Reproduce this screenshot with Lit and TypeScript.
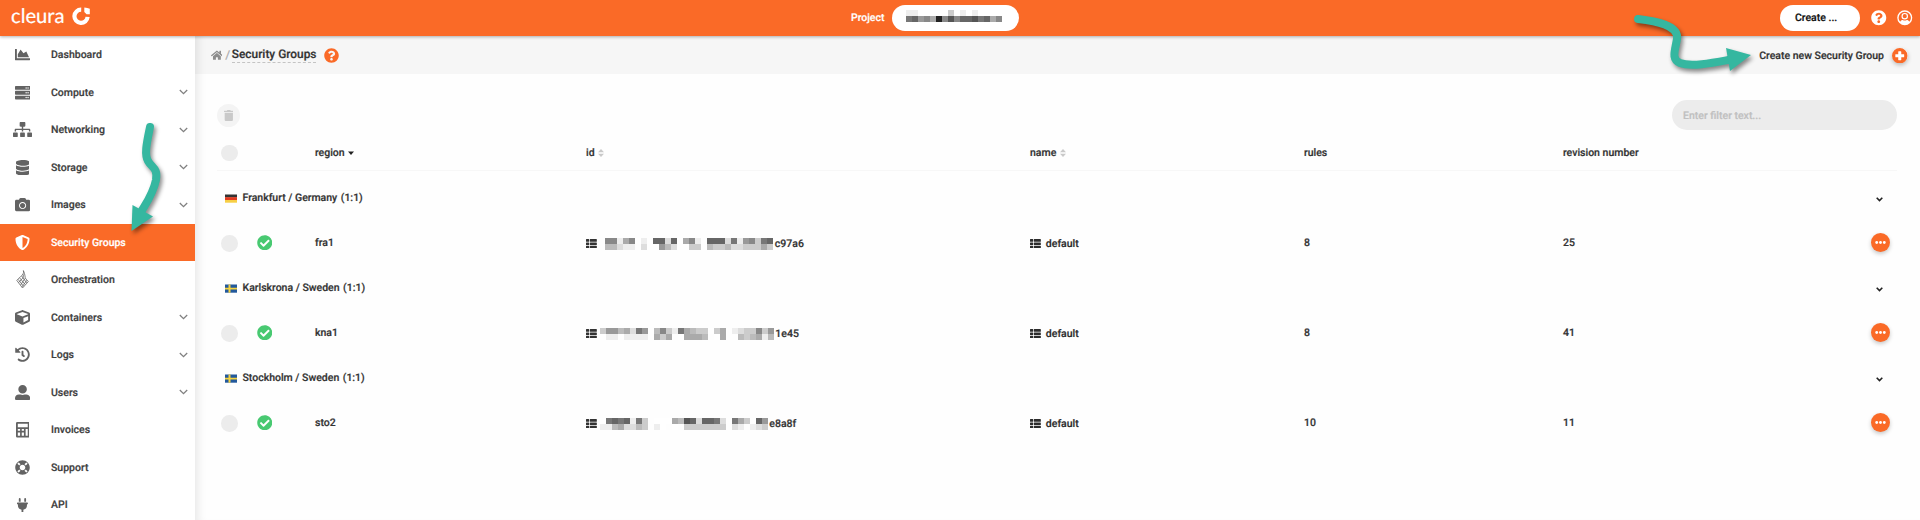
import { LitElement, html, css, svg, nothing } from "lit";
import { customElement, property } from "lit/decorators.js";
import { classMap } from "lit/directives/class-map.js";
import { styleMap } from "lit/directives/style-map.js";

type Glyph = { w: number; h: number; d: string };
const g = (w: number, h: number, d: string): Glyph => ({ w, h, d });

const ICONS: Record<string, Glyph> = {
  chart: g(512, 512, "M500 384c6.6 0 12 5.4 12 12v40c0 6.6-5.4 12-12 12H12c-6.6 0-12-5.4-12-12V76c0-6.6 5.4-12 12-12h40c6.6 0 12 5.4 12 12v308h436zM372.7 159.5L288 216l-85.3-113.7c-5.1-6.8-15.5-6.3-19.9 1L96 248v104h384l-89.9-187.8c-3.2-6.5-11.4-8.7-17.4-4.7z"),
  server: g(512, 512, "M480 160H32c-17.673 0-32-14.327-32-32V64c0-17.673 14.327-32 32-32h448c17.673 0 32 14.327 32 32v64c0 17.673-14.327 32-32 32zm-48-88c-13.255 0-24 10.745-24 24s10.745 24 24 24 24-10.745 24-24-10.745-24-24-24zm-64 0c-13.255 0-24 10.745-24 24s10.745 24 24 24 24-10.745 24-24-10.745-24-24-24zm112 248H32c-17.673 0-32-14.327-32-32v-64c0-17.673 14.327-32 32-32h448c17.673 0 32 14.327 32 32v64c0 17.673-14.327 32-32 32zm-48-88c-13.255 0-24 10.745-24 24s10.745 24 24 24 24-10.745 24-24-10.745-24-24-24zm-64 0c-13.255 0-24 10.745-24 24s10.745 24 24 24 24-10.745 24-24-10.745-24-24-24zm112 248H32c-17.673 0-32-14.327-32-32v-64c0-17.673 14.327-32 32-32h448c17.673 0 32 14.327 32 32v64c0 17.673-14.327 32-32 32zm-48-88c-13.255 0-24 10.745-24 24s10.745 24 24 24 24-10.745 24-24-10.745-24-24-24zm-64 0c-13.255 0-24 10.745-24 24s10.745 24 24 24 24-10.745 24-24-10.745-24-24-24z"),
  sitemap: g(640, 512, "M128 352H32c-17.67 0-32 14.33-32 32v96c0 17.67 14.33 32 32 32h96c17.67 0 32-14.33 32-32v-96c0-17.67-14.33-32-32-32zm-24-80h192v48h48v-48h192v48h48v-57.59c0-21.17-17.23-38.41-38.41-38.41H344v-64h40c17.67 0 32-14.33 32-32V32c0-17.67-14.33-32-32-32H256c-17.67 0-32 14.33-32 32v96c0 17.67 14.33 32 32 32h40v64H94.41C73.23 224 56 241.23 56 262.41V320h48v-48zm264 80h-96c-17.67 0-32 14.33-32 32v96c0 17.67 14.33 32 32 32h96c17.67 0 32-14.33 32-32v-96c0-17.67-14.33-32-32-32zm240 0h-96c-17.67 0-32 14.33-32 32v96c0 17.67 14.33 32 32 32h96c17.67 0 32-14.33 32-32v-96c0-17.67-14.33-32-32-32z"),
  database: g(448, 512, "M448 73.143v45.714C448 159.143 347.667 192 224 192S0 159.143 0 118.857V73.143C0 32.857 100.333 0 224 0s224 32.857 224 73.143zM448 176v102.857C448 319.143 347.667 352 224 352S0 319.143 0 278.857V176c48.125 33.143 136.208 48.572 224 48.572S399.874 209.143 448 176zm0 160v102.857C448 479.143 347.667 512 224 512S0 479.143 0 438.857V336c48.125 33.143 136.208 48.572 224 48.572S399.874 369.143 448 336z"),
  camera: g(512, 512, "M512 144v288c0 26.5-21.5 48-48 48H48c-26.5 0-48-21.5-48-48V144c0-26.5 21.5-48 48-48h88l12.3-32.9c7-18.7 24.9-31.1 44.9-31.1h125.5c20 0 37.9 12.4 44.9 31.1L376 96h88c26.5 0 48 21.5 48 48zM376 288c0-66.2-53.8-120-120-120s-120 53.8-120 120 53.8 120 120 120 120-53.8 120-120zm-32 0c0 48.5-39.5 88-88 88s-88-39.5-88-88 39.5-88 88-88 88 39.5 88 88z"),
  shield: g(512, 512, "M466.5 83.7l-192-80a48.15 48.15 0 0 0-36.9 0l-192 80C27.7 91.1 16 108.6 16 128c0 198.5 114.5 335.7 221.5 380.3 11.8 4.9 25.1 4.9 36.9 0C360.1 472.6 496 349.3 496 128c0-19.4-11.7-36.9-29.5-44.3zM256.1 446.3l-.1-381 175.9 73.3c-3.3 151.4-82.1 261.1-175.8 307.7z"),
  cube: g(512, 512, "M239.1 6.3l-208 78c-18.7 7-31.1 25-31.1 45v225.1c0 18.2 10.3 34.8 26.5 42.9l208 104c13.5 6.8 29.4 6.8 42.9 0l208-104c16.3-8.1 26.5-24.8 26.5-42.9V129.3c0-20-12.4-37.9-31.1-44.9l-208-78C262 2.2 250 2.2 239.1 6.3zM256 68.4l192 72v1.1l-192 78-192-78v-1.1l192-72zm32 356V275.5l160-65v133.9l-160 80z"),
  history: g(512, 512, "M504 255.531c.253 136.64-111.18 248.372-247.82 248.468-59.015.042-113.223-20.53-155.822-54.911-11.077-8.94-11.905-25.541-1.839-35.607l11.267-11.267c8.609-8.609 22.353-9.551 31.891-1.984C173.062 425.135 212.781 440 256 440c101.705 0 184-82.311 184-184 0-101.705-82.311-184-184-184-48.814 0-93.149 18.969-126.068 49.932l50.754 50.754c10.08 10.08 2.941 27.314-11.313 27.314H24c-8.837 0-16-7.163-16-16V38.627c0-14.254 17.234-21.393 27.314-11.314l49.372 49.372C129.209 34.136 189.552 8 256 8c136.81 0 247.747 110.78 248 247.531zm-180.912 78.784l9.823-12.63c8.138-10.463 6.253-25.542-4.21-33.679L288 256.349V152c0-13.255-10.745-24-24-24h-16c-13.255 0-24 10.745-24 24v135.651l65.409 50.874c10.463 8.137 25.541 6.253 33.679-4.21z"),
  user: g(512, 512, "M256 288c79.5 0 144-64.5 144-144S335.5 0 256 0 112 64.5 112 144s64.5 144 144 144zm128 32h-55.1c-22.2 10.2-46.9 16-72.9 16s-50.6-5.8-72.9-16H128C57.3 320 0 377.3 0 448v16c0 26.5 21.5 48 48 48h416c26.5 0 48-21.5 48-48v-16c0-70.7-57.3-128-128-128z"),
  calculator: g(448, 512, "M40 0H408a40 40 0 0 1 40 40V472a40 40 0 0 1-40 40H40a40 40 0 0 1-40-40V40a40 40 0 0 1 40-40zM60 60V175H388V60zM60 228V292H135V228zM190 228V292H262V228zM318 228V452H388V228zM60 350V452H135V350zM190 350V452H262V350z"),
  ring: g(512, 512, "M256 8C119.033 8 8 119.033 8 256s111.033 248 248 248 248-111.033 248-248S392.967 8 256 8zm173.696 119.559l-63.399 63.399c-10.987-18.559-26.67-34.252-45.255-45.255l63.399-63.399a218.396 218.396 0 0 1 45.255 45.255zM256 352c-53.019 0-96-42.981-96-96s42.981-96 96-96 96 42.981 96 96-42.981 96-96 96zM127.559 82.304l63.399 63.399c-18.559 10.987-34.252 26.67-45.255 45.255l-63.399-63.399a218.372 218.372 0 0 1 45.255-45.255zM82.304 384.441l63.399-63.399c10.987 18.559 26.67 34.252 45.255 45.255l-63.399 63.399a218.396 218.396 0 0 1-45.255-45.255zm302.137 45.255l-63.399-63.399c18.559-10.987 34.252-26.67 45.255-45.255l63.399 63.399a218.403 218.403 0 0 1-45.255 45.255z"),
  plug: g(384, 512, "M320 32a32 32 0 0 0-64 0v96h64zm48 128H16A16 16 0 0 0 0 176v32a16 16 0 0 0 16 16h16v32a160.07 160.07 0 0 0 128 156.8V512h64v-99.2A160.07 160.07 0 0 0 352 256v-32h16a16 16 0 0 0 16-16v-32a16 16 0 0 0-16-16zM128 32a32 32 0 0 0-64 0v96h64z"),
  home: g(576, 512, "M280.37 148.26L96 300.11V464a16 16 0 0 0 16 16l112.06-.29a16 16 0 0 0 15.92-16V368a16 16 0 0 1 16-16h64a16 16 0 0 1 16 16v95.64a16 16 0 0 0 16 16.05L464 480a16 16 0 0 0 16-16V300L295.67 148.26a12.19 12.19 0 0 0-15.3 0zM571.6 251.47L488 182.56V44.05a12 12 0 0 0-12-12h-56a12 12 0 0 0-12 12v72.61L318.47 43a48 48 0 0 0-61 0L4.34 251.47a12 12 0 0 0-1.6 16.9l25.5 31A12 12 0 0 0 45.15 301l235.22-193.74a12.19 12.19 0 0 1 15.3 0L530.9 301a12 12 0 0 0 16.9-1.6l25.5-31a12 12 0 0 0-1.7-16.93z"),
  question: g(512, 512, "M504 256c0 136.997-111.043 248-248 248S8 392.997 8 256C8 119.083 119.043 8 256 8s248 111.083 248 248zM262.655 90c-54.497 0-89.255 22.957-116.549 63.758-3.536 5.286-2.353 12.415 2.715 16.258l34.699 26.31c5.205 3.947 12.621 3.008 16.665-2.122 17.864-22.658 30.113-35.797 57.303-35.797 20.429 0 45.698 13.148 45.698 32.958 0 14.976-12.363 22.667-32.534 33.976C247.128 238.528 216 254.941 216 296v4c0 6.627 5.373 12 12 12h56c6.627 0 12-5.373 12-12v-1.333c0-28.462 83.186-29.647 83.186-106.667 0-58.002-60.165-102-116.531-102zM256 338c-25.365 0-46 20.635-46 46 0 25.364 20.635 46 46 46s46-20.636 46-46c0-25.365-20.635-46-46-46z"),
  account: g(512, 512, "M256 8a248 248 0 1 0 0 496 248 248 0 0 0 0-496zM256 56a200 200 0 0 1 150 332c-18-38-48-58-82-58-22 12-44 18-68 18s-46-6-68-18c-34 0-64 20-82 58A200 200 0 0 1 256 56zM256 96a108 108 0 1 0 0 216 108 108 0 0 0 0-216zM256 136a68 68 0 1 1 0 136 68 68 0 0 1 0-136z"),
  check: g(512, 512, "M504 256c0 136.967-111.033 248-248 248S8 392.967 8 256 119.033 8 256 8s248 111.033 248 248zM227.314 387.314l184-184c6.248-6.248 6.248-16.379 0-22.627l-22.627-22.627c-6.248-6.249-16.379-6.249-22.628 0L216 308.118l-70.059-70.059c-6.248-6.248-16.379-6.248-22.628 0l-22.627 22.627c-6.248 6.248-6.248 16.379 0 22.627l104 104c6.249 6.249 16.379 6.249 22.628.001z"),
  plus: g(512, 512, "M256 0a256 256 0 1 0 0 512 256 256 0 0 0 0-512zM218 110h76q12 0 12 12v84h84q12 0 12 12v76q0 12-12 12h-84v84q0 12-12 12h-76q-12 0-12-12v-84h-84q-12 0-12-12v-76q0-12 12-12h84v-84q0-12 12-12z"),
  trash: g(448, 512, "M32 464a48 48 0 0 0 48 48h288a48 48 0 0 0 48-48V128H32zM432 32H312l-9.4-18.7A24 24 0 0 0 281.1 0H166.8a23.72 23.72 0 0 0-21.4 13.3L136 32H16A16 16 0 0 0 0 48v32a16 16 0 0 0 16 16h416a16 16 0 0 0 16-16V48a16 16 0 0 0-16-16z"),
  list: g(512, 448, "M24 0h101a24 24 0 0 1 24 24v80a24 24 0 0 1-24 24H24a24 24 0 0 1-24-24V24A24 24 0 0 1 24 0zM24 160h101a24 24 0 0 1 24 24v80a24 24 0 0 1-24 24H24a24 24 0 0 1-24-24v-80a24 24 0 0 1 24-24zM24 320h101a24 24 0 0 1 24 24v80a24 24 0 0 1-24 24H24a24 24 0 0 1-24-24v-80a24 24 0 0 1 24-24zM205 0h283a24 24 0 0 1 24 24v80a24 24 0 0 1-24 24H205a24 24 0 0 1-24-24V24a24 24 0 0 1 24-24zM205 160h283a24 24 0 0 1 24 24v80a24 24 0 0 1-24 24H205a24 24 0 0 1-24-24v-80a24 24 0 0 1 24-24zM205 320h283a24 24 0 0 1 24 24v80a24 24 0 0 1-24 24H205a24 24 0 0 1-24-24v-80a24 24 0 0 1 24-24z"),
};

const icon = (name: string, height: number) => {
  const i = ICONS[name];
  return html`<svg width=${(height * i.w) / i.h} height=${height} viewBox="0 0 ${i.w} ${i.h}" fill="currentColor" fill-rule="evenodd"><path d=${i.d} /></svg>`;
};

const flame = html`<svg width="13" height="19" viewBox="0 0 13 19" fill="none" stroke="currentColor" stroke-width="0.8">
  <path d="M7.4.6C8.2 3.4 6.6 4.6 4.6 6.6L.8 10.4 6.5 18 12.3 11.6 9.8 8.8C8.6 7.4 9.6 5.2 7.4.6" />
  <path d="M7.4 4.4L7.2 7.6 2.6 12.6M9.2 8.2L4.6 15M11 10.2L6 16.9M3.6 7.8L9 14.4M2.2 9.4L7.6 16.3M5.6 6L10.6 12.8" />
</svg>`;

/** Rows of grey 6px cells that hide a value; one hex digit per cell, "." is empty. */
@customElement("redacted-text")
class RedactedText extends LitElement {
  @property({ attribute: false }) rows: string[] = [];

  static styles = css`
    :host { display: block; flex: none; }
    svg { display: block; }
  `;

  render() {
    const w = Math.max(...this.rows.map((r) => r.length)) * 6;
    return html`<svg width=${w} height=${this.rows.length * 6} shape-rendering="crispEdges">
      ${this.rows.map((row, y) =>
        [...row].map((c, x) => (c === "." ? nothing : svg`<rect x=${x * 6} y=${y * 6} width="6" height="6" fill=${"#" + c.repeat(3)} />`))
      )}
    </svg>`;
  }
}

const NAV = [
  { label: "Dashboard", icon: "chart", size: 15 },
  { label: "Compute", icon: "server", size: 15.5, sub: true },
  { label: "Networking", icon: "sitemap", size: 15.2, sub: true },
  { label: "Storage", icon: "database", size: 15.5, sub: true },
  { label: "Images", icon: "camera", size: 15.2, sub: true },
  { label: "Security Groups", icon: "shield", size: 15, active: true },
  { label: "Orchestration", icon: "flame", size: 19 },
  { label: "Containers", icon: "cube", size: 15, sub: true },
  { label: "Logs", icon: "history", size: 15, sub: true },
  { label: "Users", icon: "user", size: 15.2, sub: true },
  { label: "Invoices", icon: "calculator", size: 15.5 },
  { label: "Support", icon: "ring", size: 15 },
  { label: "API", icon: "plug", size: 14.5 },
];

const PROJECT_MASK = ["ee.....c.e.e....", "7698a285866576a8"];

const GROUPS = [
  {
    title: "Frankfurt / Germany", count: "(1:1)", flag: "de", region: "fra1", tail: "c97a6", rules: "8", revision: "25", lead: 8.5,
    mask: ["88ea8fe.66d6fa8e.666d7e98c76", "bbdee.d..9bd..cc.bccbddcccac"],
  },
  {
    title: "Karlskrona / Sweden", count: "(1:1)", flag: "se", region: "kna1", tail: "1e45", rules: "8", revision: "41", lead: 3,
    mask: ["c99bad79.b8ce7abccfca.edcc8c9", "fee.eeee.aca.faaab.fa..bcbaeb"],
  },
  {
    title: "Stockholm / Sweden", count: "(1:1)", flag: "se", region: "sto2", tail: "e8a8f", rules: "10", revision: "11", lead: 3,
    mask: ["f7676e7c.fffab56d667d.7acf69", "eebaddbc.ef.f.ccccccc.de.edc"],
  },
];

@customElement("app-root")
class AppRoot extends LitElement {
  static styles = css`
    :host { display: block; width: 1920px; height: 520px; overflow: hidden; position: relative; background: #fefefe; color: #333; font: 500 10.5px/16px Roboto, sans-serif; text-rendering: geometricPrecision; -webkit-text-stroke: 0.2px currentColor; }
    svg { display: block; flex: none; }
    .top { display: flex; align-items: center; height: 36px; background: #fa6a27; color: #fff; position: relative; z-index: 2; box-shadow: 0 1px 3px rgba(0, 0, 0, 0.3); }
    .brand { display: flex; align-items: center; gap: 7px; width: 840px; padding: 0 0 4px 11px; }
    .word { font: 400 20.2px/24px Lato, sans-serif; }
    .pill { display: flex; align-items: center; height: 26px; border-radius: 13px; background: #fff; color: #111; box-sizing: border-box; }
    .project { width: 127.5px; margin-left: 7.5px; padding: 0 0 4px 14px; }
    .tools { display: flex; align-items: center; margin-left: auto; padding-right: 7.5px; }
    .create { width: 80px; padding-left: 15px; margin-right: 11px; }
    .tools svg + svg { margin-left: 10.5px; }
    .body { display: flex; height: 484px; }
    nav { width: 195px; background: #fff; box-sizing: border-box; flex: none; }
    .item { display: grid; grid-template-columns: 45px 1fr 16px; align-items: center; height: 37.5px; color: #404040; }
    .item .pic { display: flex; justify-content: center; color: #636363; }
    .item .label { padding-left: 6px; padding-top: 1px; }
    .item.active { background: #fa6a27; color: #fff; }
    .item.active .pic { color: #fff; }
    .chev { color: #808080; }
    main { flex: 1; box-shadow: inset 10px 0 10px -7px rgba(0, 0, 0, 0.09); }
    .crumbs { display: flex; align-items: center; height: 38px; background: rgba(0, 0, 0, 0.031); padding: 0 12.5px 0 15.5px; }
    .home { color: #8c8c8c; }
    .slash { color: #aaa; margin: 0 1.5px 0 3px; font-weight: 400; font-size: 12px; }
    .title { font-size: 11.9px; line-height: 15px; border-bottom: 1.5px dashed #c4c4c4; margin-right: 8px; }
    .orange { color: #fa6a27; }
    .new { display: flex; align-items: center; gap: 8px; margin-left: auto; padding-top: 1px; }
    .plus { border-radius: 50%; background: #fff; box-shadow: 0 2px 4px rgba(0, 0, 0, 0.25); color: #fa6a27; }
    .content { padding: 26px 23px 0 22px; }
    .bar { display: flex; justify-content: space-between; align-items: center; height: 30px; }
    .bin { width: 23px; height: 23px; border-radius: 50%; background: #f4f4f4; color: #c9c9c9; display: flex; align-items: center; justify-content: center; }
    .filter { width: 225px; height: 30px; border-radius: 15px; background: #ececec; color: #c0c0c0; line-height: 31px; padding-left: 11px; box-sizing: border-box; }
    .row { display: grid; grid-template-columns: 40px 58px 271px 444px 274px 259px 1fr 40px; align-items: center; height: 45px; }
    .head { height: 41px; padding-top: 6px; box-sizing: border-box; border-bottom: 1px solid #f7f7f7; margin-bottom: 4px; }
    .head .cell { gap: 3.5px; }
    .dot { display: block; width: 16.5px; height: 16.5px; border-radius: 50%; background: #ececec; margin-left: 4px; }
    .row .low { padding-top: 2px; }
    .ok { color: #48c971; margin-left: -0.5px; }
    .cell { display: flex; align-items: center; }
    .tail { margin-left: 1.5px; }
    .group { display: flex; align-items: center; height: 45px; padding: 1px 14px 0 8px; box-sizing: border-box; }
    .flag { margin-right: 5.5px; }
    .count { margin-left: 3.5px; }
    .group .arrow { margin-left: auto; padding-top: 3px; }
    .name { gap: 5px; color: #2c2c2c; }
    .more { justify-self: end; margin-right: 7px; width: 19px; height: 19px; border-radius: 50%; background: #fa6a27; box-shadow: 0 2px 4px rgba(0, 0, 0, 0.22); display: flex; align-items: center; justify-content: center; }
    .notes { position: absolute; left: 0; top: 0; z-index: 3; pointer-events: none; filter: drop-shadow(2px 3px 2px rgba(0, 0, 0, 0.45)); }
  `;

  private sorter() {
    return html`<svg width="6" height="8" viewBox="0 0 6 8" fill="#c9c9c9"><path d="M3 0L6 3.3H0zM3 8L0 4.7H6z" /></svg>`;
  }

  private flag(code: string) {
    return code === "de"
      ? html`<svg class="flag" width="12" height="9" viewBox="0 0 12 9"><path fill="#333" d="M0 .5h12v3H0z" /><path fill="#e33a1e" d="M0 3.2h12v3H0z" /><path fill="#f7cf45" d="M0 6h12v2.7H0z" /></svg>`
      : html`<svg class="flag" width="12" height="9" viewBox="0 0 12 9"><path fill="#23599c" d="M0 .5h12v8.2H0z" /><path fill="#f5d33f" d="M3.5.5h2v8.2h-2zM0 3.7h12v1.9H0z" /></svg>`;
  }

  render() {
    return html`
      <header class="top">
        <div class="brand">
          <span class="word">cleura</span>
          <svg width="18" height="18" viewBox="0 0 18 18"><path d="M9.2 2.7A6.6 6.6 0 1 0 15.6 9.9" fill="none" stroke="#fff" stroke-width="4.2" /><path d="M12.3.6Q15.6.9 17.8 1.8V7.2H14.6L12.3 5z" fill="#fff" /></svg>
        </div>
        <span>Project</span>
        <div class="pill project"><redacted-text .rows=${PROJECT_MASK}></redacted-text></div>
        <div class="tools">
          <div class="pill create">Create ...</div>
          ${icon("question", 15.5)}${icon("account", 15.5)}
        </div>
      </header>
      <div class="body">
        <nav>
          ${NAV.map(
            (n) => html`<div class=${classMap({ item: true, active: !!n.active })}>
              <span class="pic">${n.icon === "flame" ? flame : icon(n.icon, n.size)}</span>
              <span class="label">${n.label}</span>
              ${n.sub ? html`<svg class="chev" width="9" height="6" viewBox="0 0 9 6" fill="none" stroke="currentColor" stroke-width="1.3"><path d="M.8 1l3.7 3.6L8.2 1" /></svg>` : nothing}
            </div>`
          )}
        </nav>
        <main>
          <div class="crumbs">
            <span class="home">${icon("home", 10.5)}</span>
            <span class="slash">/</span><span class="title">Security Groups</span>
            <span class="orange">${icon("question", 15)}</span>
            <div class="new">Create new Security Group<span class="plus">${icon("plus", 15.5)}</span></div>
          </div>
          <div class="content">
            <div class="bar"><div class="bin">${icon("trash", 11)}</div><div class="filter">Enter filter text...</div></div>
            <div class="row head">
              <span class="dot"></span><span></span>
              <span class="cell">region <svg width="6" height="4" viewBox="0 0 6 4" fill="#222"><path d="M0 .5h6L3 4z" /></svg></span>
              <span class="cell">id ${this.sorter()}</span>
              <span class="cell">name ${this.sorter()}</span>
              <span>rules</span><span>revision number</span>
            </div>
            ${GROUPS.map(
              (r) => html`
                <div class="group">${this.flag(r.flag)}<span>${r.title}</span><span class="count">${r.count}</span>
                  <span class="arrow"><svg width="7" height="5" viewBox="0 0 7 5" fill="none" stroke="#222" stroke-width="1.6"><path d="M.7.7l2.8 2.8L6.3.7" /></svg></span>
                </div>
                <div class="row">
                  <span class="low"><span class="dot"></span></span>
                  <span class="ok">${icon("check", 15.5)}</span>
                  <span>${r.region}</span>
                  <span class="cell low">${icon("list", 9.5)}<redacted-text style=${styleMap({ marginLeft: r.lead + "px" })} .rows=${r.mask}></redacted-text><span class="tail">${r.tail}</span></span>
                  <span class="cell name low">${icon("list", 9.5)}default</span>
                  <span>${r.rules}</span>
                  <span>${r.revision}</span>
                  <span class="more"><svg width="11" height="3" viewBox="0 0 11 3" fill="#fff"><circle cx="1.7" cy="1.5" r="1.4" /><circle cx="5.5" cy="1.5" r="1.4" /><circle cx="9.3" cy="1.5" r="1.4" /></svg></span>
                </div>`
            )}
          </div>
        </main>
      </div>
      <svg class="notes" width="1920" height="520" viewBox="0 0 1920 520" fill="none" stroke="#35b7a0" stroke-width="8" stroke-linecap="round">
        <path d="M150 127C147 142 144 154 148 161C152 168 158 168 156 180C153 194 147 202 141 212" />
        <path d="M131.5 231L132.5 205L153 216.5z" fill="#35b7a0" stroke="none" />
        <path d="M1638 19C1655 21 1679 25 1677 39C1675 51 1671 59 1680 63C1691 67 1712 63 1728 60" />
        <path d="M1751 55L1726 48L1730 71z" fill="#35b7a0" stroke="none" />
      </svg>
    `;
  }
}
